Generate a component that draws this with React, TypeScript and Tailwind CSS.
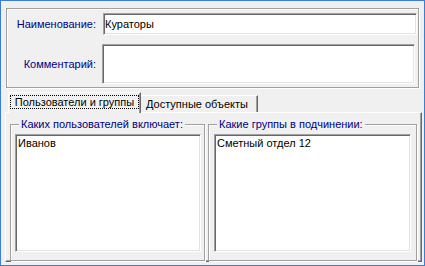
import React from 'react';

// classic Win32 edges
const sunken =
  'bg-white border border-t-[#a0a0a0] border-l-[#a0a0a0] border-r-white border-b-white shadow-[inset_1px_1px_0_#696969,inset_-1px_-1px_0_#e3e3e3]';
const etched = 'border border-[#a0a0a0] shadow-[1px_1px_0_#ffffff,inset_1px_1px_0_#ffffff]';

interface GroupProps {
  title: string;
  width: string;
  listWidth: string;
  listOffset: string;
  item: string;
}

const Group: React.FC<GroupProps> = ({ title, width, listWidth, listOffset, item }) => (
  <fieldset className={`${etched} ${width} pb-[4px]`}>
    <legend className="ml-[8px] px-[2px] bg-[#f0f0f0] leading-[13px] text-[#000080]">{title}</legend>
    <div className={`${sunken} ${listWidth} ${listOffset} mt-[3px] h-[118px] pl-[2px] pt-[2px] leading-[13px]`}>
      {item}
    </div>
  </fieldset>
);

export default function App() {
  return (
    <div className="w-[425px] h-[266px] border border-[#3a7fd5] bg-[#f0f0f0] font-['Liberation_Sans',Arial,sans-serif] text-[11px] text-black overflow-hidden">
      {/* header fields */}
      <div className={`${etched} mt-[7px] ml-[5px] w-[413px] h-[80px]`}>
        <div className="flex items-center mt-[4px]">
          <span className="w-[89px] text-right text-[#000080]">Наименование:</span>
          <div className={`${sunken} ml-[7px] w-[314px] h-[22px] flex items-center pl-[1px] leading-[13px]`}>
            Кураторы
          </div>
        </div>
        <div className="flex items-center mt-[9px]">
          <span className="w-[89px] text-right text-[#000080]">Комментарий:</span>
          <div className={`${sunken} ml-[6px] w-[313px] h-[40px]`} />
        </div>
      </div>

      {/* tabs */}
      <div className="flex items-end h-[20px] ml-[7px] mt-[4px]">
        <div className="relative z-10 -mb-px h-[21px] w-[133px] bg-[#f0f0f0] border-t border-l border-r border-t-white border-l-white border-r-[#696969] shadow-[inset_-1px_0_0_#a0a0a0] pt-[2px] px-[1px]">
          <div className="h-[14px] border border-dotted border-black flex items-center justify-center leading-[13px]">
            Пользователи и группы
          </div>
        </div>
        <div className="h-[17px] w-[117px] border-t border-r border-t-white border-r-[#696969] shadow-[inset_-1px_0_0_#a0a0a0] flex items-center pl-[5px] leading-[13px]">
          Доступные объекты
        </div>
      </div>

      {/* tab page */}
      <div className="ml-[4px] w-[417px] h-[150px] border border-t-white border-l-white border-r-[#696969] border-b-[#696969] shadow-[inset_-1px_-1px_0_#a0a0a0] flex gap-[3px] pl-[4px] pt-[5px]">
        <Group
          title="Каких пользователей включает:"
          width="w-[195px]"
          listWidth="w-[186px]"
          listOffset="ml-[4px]"
          item="Иванов"
        />
        <Group
          title="Какие группы в подчинении:"
          width="w-[209px]"
          listWidth="w-[197px]"
          listOffset="ml-[5px]"
          item="Сметный отдел 12"
        />
      </div>
    </div>
  );
}
